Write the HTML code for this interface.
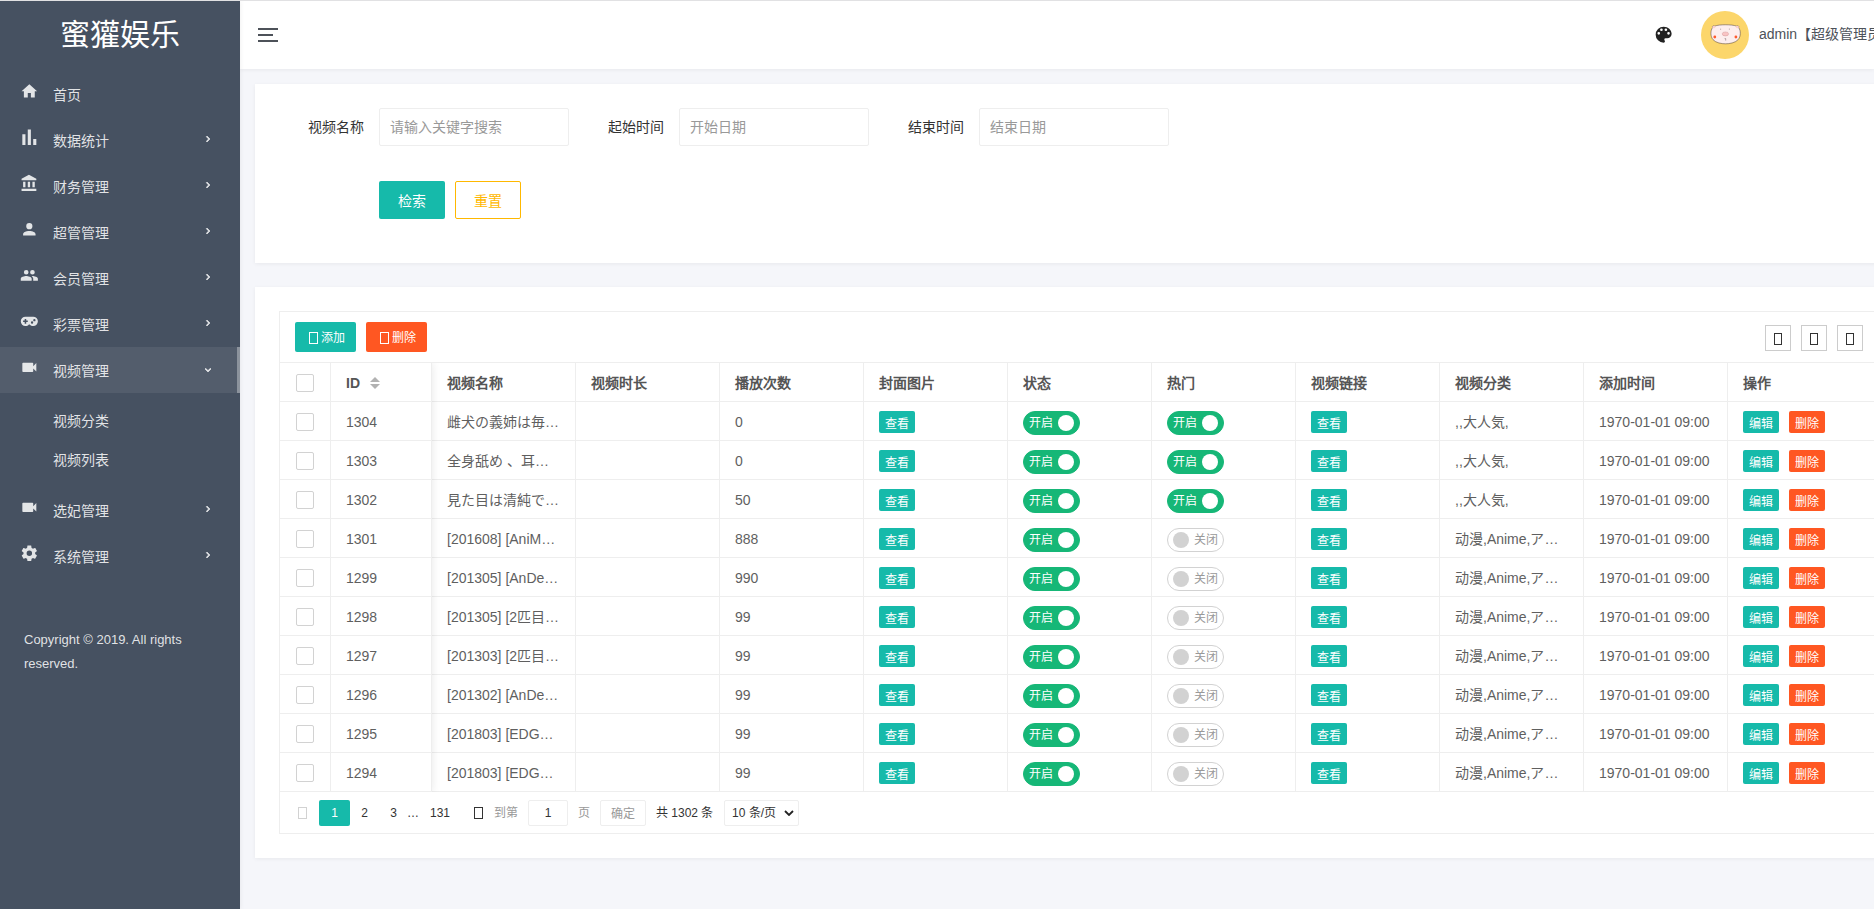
<!DOCTYPE html>
<html lang="zh-CN">
<head>
<meta charset="utf-8">
<title>视频列表</title>
<style>
*{box-sizing:border-box;margin:0;padding:0}
html,body{width:1874px;height:909px;overflow:hidden}
body{font-family:"Liberation Sans",sans-serif;font-size:14px;color:#4d5259;background:#f5f6fa;position:relative;line-height:1.5}
ul{list-style:none}
a{text-decoration:none;color:inherit}
.topline{position:absolute;left:0;top:0;width:1874px;height:1px;background:#e1e1e3;z-index:30}
/* sidebar */
.sidebar{position:absolute;left:0;top:1px;width:240px;height:908px;background:#465161;color:rgba(255,255,255,.85);z-index:20;box-shadow:0 0 5px rgba(0,0,0,.08)}
.logo{height:68px;line-height:68px;text-align:center;font-size:30px;color:#fff;white-space:nowrap}
.nav{margin-top:2px}
.nav>li>a{display:block;position:relative;height:46px;line-height:48px;padding-left:53px;font-size:14px;color:rgba(255,255,255,.85)}
.nav>li>a svg.ic{position:absolute;left:20.3px;top:11px;width:18.66px;height:18.66px;fill:rgba(255,255,255,.85)}
.nav>li>a svg.ch{position:absolute;left:202px;top:16px;width:12px;height:12px;fill:rgba(255,255,255,.85);stroke:rgba(255,255,255,.85);stroke-width:1.2}
.nav>li.open>a svg.ch{top:17px}
.nav>li.open>a{background:rgba(255,255,255,.075);border-right:3px solid #8c939d}
.sub{padding:8px 0}
.sub a{display:block;height:39px;line-height:40px;padding-left:53px;color:rgba(255,255,255,.85)}
.sfoot{margin-top:24px;padding:25px 24px;font-size:13px;line-height:24px;color:rgba(255,255,255,.85);width:240px}
/* header */
.header{position:absolute;left:240px;top:1px;width:1634px;height:68px;background:#fff;box-shadow:0 1px 4px rgba(0,0,0,.06);z-index:10}
.tog{position:absolute;left:18px;top:27px;width:20px}
.tog i{display:block;height:2px;background:#4d5259;margin-bottom:4px;width:20px}
.tog i:nth-child(2){width:15px}
.pal{position:absolute;left:1412.5px;top:23.3px;width:21.3px;height:21.3px;fill:#222}
.avatar{position:absolute;left:1461px;top:10px;width:48px;height:48px;border-radius:50%;background:#fcd66b;overflow:hidden}
.uname{position:absolute;left:1519px;top:0;height:68px;line-height:66px;white-space:nowrap;color:#4d5259;font-size:14px}
/* cards */
.card{position:absolute;left:255px;width:1700px;background:#fff;box-shadow:0 1px 4px rgba(0,0,0,.06)}
.c1{top:84px;height:179px}
.c2{top:287px;height:571px}
/* form */
.flabel{position:absolute;top:24px;height:38px;line-height:38px;width:110px;padding-right:15px;text-align:right;color:#333;font-size:14px;white-space:nowrap}
.finput{position:absolute;top:24px;height:38px;width:190px;border:1px solid #eee;border-radius:2px;line-height:36px;padding-left:10px;color:#999;font-size:14px;background:#fff;white-space:nowrap}
.btn{position:absolute;top:97px;height:38px;line-height:40px;width:66px;text-align:center;border-radius:2px;font-size:14px;white-space:nowrap}
.btn.p{background:#16baaa;color:#fff}
.btn.w{border:1px solid #ffb800;color:#ffb800;background:#fff;line-height:38px}

/* table */
.tview{position:absolute;left:24px;top:24px;width:1700px;height:523px;border:1px solid #eee;color:#5f5f5f}
.ttool{position:relative;height:51px;border-bottom:1px solid #eee}
.sm{position:absolute;top:10px;height:30px;width:61px;line-height:33px;border-radius:2px;color:#fff;font-size:12px;padding-left:26px;white-space:nowrap}
.t{background:#16baaa}.d{background:#ff5722}
.tofu{position:absolute;width:9px;height:12px;border:1px solid #fff}
.sm .tofu{left:14px;top:10px}
.tic{position:absolute;top:13px;width:26px;height:26px;border:1px solid #ccc}
.tic b{position:absolute;left:8px;top:7px;width:8px;height:12px;border:1px solid #333}
.tbox{position:relative;overflow:hidden;height:429px}
table{border-collapse:separate;border-spacing:0;table-layout:fixed;width:1668px}
th,td{height:39px;border-right:1px solid #eee;border-bottom:1px solid #eee;padding:0;text-align:left;font-size:14px;color:#5f5f5f;font-weight:normal;vertical-align:top;line-height:36px}
.c{display:flex;align-items:center;height:38px;padding:2px 15px 0;white-space:nowrap;overflow:hidden;line-height:36px;font-size:14px}
th{font-weight:bold;color:#555}
.ck .c{padding:2px 0 0;justify-content:center}
.cb{display:inline-block;width:18px;height:18px;border:1px solid #d2d2d2;border-radius:2px;background:#fff;flex:none}
.sort{display:inline-block;position:relative;width:10px;height:12px;margin-left:10px;flex:none}
.sort i{position:absolute;left:0;border:5px solid transparent}
.sort .u{top:-5px;border-bottom-color:#b2b2b2}
.sort .dn{top:7px;border-top-color:#b2b2b2}
.xs{display:inline-block;width:36px;height:22px;line-height:26px;overflow:hidden;font-size:12px;color:#fff;text-align:center;border-radius:2px;flex:none}
.xs+.xs{margin-left:10px}
.sw{display:inline-block;position:relative;width:57px;height:24px;border:1px solid #d2d2d2;border-radius:20px;background:#fff;flex:none;margin-top:2px;font-size:12px;line-height:23px}
.sw i{position:absolute;left:5px;top:3px;width:16px;height:16px;border-radius:50%;background:#d2d2d2}
.sw em{position:absolute;left:26px;top:0;font-style:normal;color:#999;width:24px;text-align:center}
.sw.on{background:#16b777;border-color:#16b777}
.sw.on i{left:34px;background:#fff}
.sw.on em{left:5px;color:#fff}
.fixl{position:absolute;left:0;top:0;width:152px;height:429px;box-shadow:1px 0 8px rgba(0,0,0,.08);pointer-events:none}
.tpage{position:relative;height:41px;font-size:12px;color:#333}
.tpage .tofu{top:15px;height:12px;width:9px}
.tofu.g{border-color:#d2d2d2}.tofu.k{border-color:#333}
.pg{position:absolute;top:8px;height:26px;line-height:26px;text-align:center;color:#333;border-radius:2px}
.pg.cur{background:#16baaa;color:#fff}
.pt{position:absolute;top:8px;height:26px;line-height:26px;white-space:nowrap;color:#333}
.pt.g{color:#999}
.pin{position:absolute;top:8px;width:40px;height:26px;line-height:24px;border:1px solid #eee;border-radius:2px;text-align:center;color:#333}
.pbtn{position:absolute;top:8px;width:46px;height:26px;line-height:26px;border:1px solid #eee;border-radius:2px;text-align:center;color:#999}
.psel{position:absolute;top:8px;width:75px;height:26px;line-height:24px;border:1px solid #eee;border-radius:2px;padding-left:7px;color:#333;white-space:nowrap}
.psel svg{position:absolute;right:4px;top:9px;width:10px;height:6px}
</style>
</head>
<body>
<div class="topline"></div>

<div class="sidebar">
  <div class="logo">蜜獾娱乐</div>
  <ul class="nav">
    <li><a href="#"><svg class="ic" viewBox="0 0 24 24"><path d="M10,20V14H14V20H19V12H22L12,3L2,12H5V20H10Z"/></svg>首页</a>
    </li>
    <li><a href="#"><svg class="ic" viewBox="0 0 24 24"><path d="M3,22V8H7V22H3M10,22V2H14V22H10M17,22V14H21V22H17Z"/></svg>数据统计<svg class="ch" viewBox="0 0 24 24"><path d="M8.59,16.58L13.17,12L8.59,7.41L10,6L16,12L10,18L8.59,16.58Z"/></svg></a>
    </li>
    <li><a href="#"><svg class="ic" viewBox="0 0 24 24"><path d="M11.5,1L2,6V8H21V6M16,10V17H19V10M2,22H21V19H2M10,10V17H13V10M4,10V17H7V10H4Z"/></svg>财务管理<svg class="ch" viewBox="0 0 24 24"><path d="M8.59,16.58L13.17,12L8.59,7.41L10,6L16,12L10,18L8.59,16.58Z"/></svg></a>
    </li>
    <li><a href="#"><svg class="ic" viewBox="0 0 24 24"><path d="M12,4A4,4 0 0,1 16,8A4,4 0 0,1 12,12A4,4 0 0,1 8,8A4,4 0 0,1 12,4M12,14C16.42,14 20,15.79 20,18V20H4V18C4,15.79 7.58,14 12,14Z"/></svg>超管管理<svg class="ch" viewBox="0 0 24 24"><path d="M8.59,16.58L13.17,12L8.59,7.41L10,6L16,12L10,18L8.59,16.58Z"/></svg></a>
    </li>
    <li><a href="#"><svg class="ic" viewBox="0 0 24 24"><path d="M16,13C15.71,13 15.38,13 15.03,13.05C16.19,13.89 17,15 17,16.5V19H23V16.5C23,14.17 18.33,13 16,13M8,13C5.67,13 1,14.17 1,16.5V19H15V16.5C15,14.17 10.33,13 8,13M8,11A3,3 0 0,0 11,8A3,3 0 0,0 8,5A3,3 0 0,0 5,8A3,3 0 0,0 8,11M16,11A3,3 0 0,0 19,8A3,3 0 0,0 16,5A3,3 0 0,0 13,8A3,3 0 0,0 16,11Z"/></svg>会员管理<svg class="ch" viewBox="0 0 24 24"><path d="M8.59,16.58L13.17,12L8.59,7.41L10,6L16,12L10,18L8.59,16.58Z"/></svg></a>
    </li>
    <li><a href="#"><svg class="ic" viewBox="0 0 24 24"><path d="M7,6H17A6,6 0 0,1 23,12A6,6 0 0,1 17,18C15.22,18 13.63,17.23 12.53,16H11.47C10.37,17.23 8.78,18 7,18A6,6 0 0,1 1,12A6,6 0 0,1 7,6M6,9V11H4V13H6V15H8V13H10V11H8V9H6M15.5,12A1.5,1.5 0 0,0 14,13.5A1.5,1.5 0 0,0 15.5,15A1.5,1.5 0 0,0 17,13.5A1.5,1.5 0 0,0 15.5,12M18.5,9A1.5,1.5 0 0,0 17,10.5A1.5,1.5 0 0,0 18.5,12A1.5,1.5 0 0,0 20,10.5A1.5,1.5 0 0,0 18.5,9Z"/></svg>彩票管理<svg class="ch" viewBox="0 0 24 24"><path d="M8.59,16.58L13.17,12L8.59,7.41L10,6L16,12L10,18L8.59,16.58Z"/></svg></a>
    </li>
    <li class="open"><a href="#"><svg class="ic" viewBox="0 0 24 24"><path d="M17,10.5V7A1,1 0 0,0 16,6H4A1,1 0 0,0 3,7V17A1,1 0 0,0 4,18H16A1,1 0 0,0 17,17V13.5L21,17.5V6.5L17,10.5Z"/></svg>视频管理<svg class="ch" viewBox="0 0 24 24"><path d="M7.41,8.58L12,13.17L16.59,8.58L18,10L12,16L6,10L7.41,8.58Z"/></svg></a>
      <ul class="sub"><li><a href="#">视频分类</a></li><li><a href="#">视频列表</a></li></ul>
    </li>
    <li><a href="#"><svg class="ic" viewBox="0 0 24 24"><path d="M17,10.5V7A1,1 0 0,0 16,6H4A1,1 0 0,0 3,7V17A1,1 0 0,0 4,18H16A1,1 0 0,0 17,17V13.5L21,17.5V6.5L17,10.5Z"/></svg>选妃管理<svg class="ch" viewBox="0 0 24 24"><path d="M8.59,16.58L13.17,12L8.59,7.41L10,6L16,12L10,18L8.59,16.58Z"/></svg></a>
    </li>
    <li><a href="#"><svg class="ic" viewBox="0 0 24 24"><path d="M12,15.5A3.5,3.5 0 0,1 8.5,12A3.5,3.5 0 0,1 12,8.5A3.5,3.5 0 0,1 15.5,12A3.5,3.5 0 0,1 12,15.5M19.43,12.97C19.47,12.65 19.5,12.33 19.5,12C19.5,11.67 19.47,11.34 19.43,11L21.54,9.37C21.73,9.22 21.78,8.95 21.66,8.73L19.66,5.27C19.54,5.05 19.27,4.96 19.05,5.05L16.56,6.05C16.04,5.66 15.5,5.32 14.87,5.07L14.5,2.42C14.46,2.18 14.25,2 14,2H10C9.75,2 9.54,2.18 9.5,2.42L9.13,5.07C8.5,5.32 7.96,5.66 7.44,6.05L4.95,5.05C4.73,4.96 4.46,5.05 4.34,5.27L2.34,8.73C2.21,8.95 2.27,9.22 2.46,9.37L4.57,11C4.53,11.34 4.5,11.67 4.5,12C4.5,12.33 4.53,12.65 4.57,12.97L2.46,14.63C2.27,14.78 2.21,15.05 2.34,15.27L4.34,18.73C4.46,18.95 4.73,19.03 4.95,18.95L7.44,17.94C7.96,18.34 8.5,18.68 9.13,18.93L9.5,21.58C9.54,21.82 9.75,22 10,22H14C14.25,22 14.46,21.82 14.5,21.58L14.87,18.93C15.5,18.67 16.04,18.34 16.56,17.94L19.05,18.95C19.27,19.03 19.54,18.95 19.66,18.73L21.66,15.27C21.78,15.05 21.73,14.78 21.54,14.63L19.43,12.97Z"/></svg>系统管理<svg class="ch" viewBox="0 0 24 24"><path d="M8.59,16.58L13.17,12L8.59,7.41L10,6L16,12L10,18L8.59,16.58Z"/></svg></a>
    </li>
  </ul>
  <div class="sfoot">Copyright © 2019. All rights reserved.</div>
</div>

<div class="header">
  <div class="tog"><i></i><i></i><i></i></div>
  <svg class="pal" viewBox="0 0 24 24"><path d="M17.5,12A1.5,1.5 0 0,1 16,10.5A1.5,1.5 0 0,1 17.5,9A1.5,1.5 0 0,1 19,10.5A1.5,1.5 0 0,1 17.5,12M14.5,8A1.5,1.5 0 0,1 13,6.5A1.5,1.5 0 0,1 14.5,5A1.5,1.5 0 0,1 16,6.5A1.5,1.5 0 0,1 14.5,8M9.5,8A1.5,1.5 0 0,1 8,6.5A1.5,1.5 0 0,1 9.5,5A1.5,1.5 0 0,1 11,6.5A1.5,1.5 0 0,1 9.5,8M6.5,12A1.5,1.5 0 0,1 5,10.5A1.5,1.5 0 0,1 6.5,9A1.5,1.5 0 0,1 8,10.5A1.5,1.5 0 0,1 6.5,12M12,3A9,9 0 0,0 3,12A9,9 0 0,0 12,21A1.5,1.5 0 0,0 13.5,19.5C13.5,19.11 13.35,18.76 13.11,18.5C12.88,18.23 12.73,17.88 12.73,17.5A1.5,1.5 0 0,1 14.23,16H16A5,5 0 0,0 21,11C21,6.58 16.97,3 12,3Z"/></svg>
  <div class="avatar"><svg viewBox="0 0 48 48" width="48" height="48">
    <path d="M11.6,16.6C10.8,15 12.5,14.4 13.8,15.1C18,13.3 31,13.3 35.4,15.1C36.7,14.4 38.4,15 37.6,16.6C40,19.5 39.9,25.5 37.2,28.6C34.2,31.9 28.5,32.8 24.5,32.8C20.5,32.8 14.8,31.9 12,28.6C9.3,25.5 9.3,19.5 11.6,16.6Z" fill="#fdeeee" stroke="#5a4a42" stroke-width=".55"/>
    <ellipse cx="12.9" cy="16.1" rx="1.5" ry="1.2" fill="#fbd0d0"/><ellipse cx="36.3" cy="16.1" rx="1.5" ry="1.2" fill="#fbd0d0"/>
    <ellipse cx="24.4" cy="22.9" rx="3.2" ry="2" fill="#f9c4c4" stroke="#c98a8a" stroke-width=".35"/>
    <circle cx="13.8" cy="26" r="1.4" fill="#ff5a2e"/><circle cx="34.9" cy="26" r="1.4" fill="#ff5a2e"/>
    <path d="M19.6 17.6v1.3M28.4 17.5v1.3" stroke="#8a7a7a" stroke-width=".5"/>
    <path d="M23.6 27.6h1.1v2" stroke="#6a5a5a" stroke-width=".5" fill="none"/>
  </svg></div>
  <div class="uname">admin【超级管理员】</div>
</div>

<div class="card c1">
  <div class="flabel" style="left:14px">视频名称</div>
  <div class="finput" style="left:124px">请输入关键字搜索</div>
  <div class="flabel" style="left:314px">起始时间</div>
  <div class="finput" style="left:424px">开始日期</div>
  <div class="flabel" style="left:614px">结束时间</div>
  <div class="finput" style="left:724px">结束日期</div>
  <div class="btn p" style="left:124px">检索</div>
  <div class="btn w" style="left:200px">重置</div>
</div>

<div class="card c2">
  <div class="tview">
    <div class="ttool">
      <a class="sm t" style="left:15px"><b class="tofu"></b>添加</a>
      <a class="sm d" style="left:86px"><b class="tofu"></b>删除</a>
      <span class="tic" style="left:1485px"><b></b></span>
      <span class="tic" style="left:1521px"><b></b></span>
      <span class="tic" style="left:1557px"><b></b></span>
    </div>
    <div class="tbox">
    <table>
      <colgroup><col style="width:51px"><col style="width:101px"><col style="width:144px"><col style="width:144px"><col style="width:144px"><col style="width:144px"><col style="width:144px"><col style="width:144px"><col style="width:144px"><col style="width:144px"><col style="width:144px"><col style="width:220px"></colgroup>
      <thead>
      <tr><th class="ck"><div class="c"><span class="cb"></span></div></th><th><div class="c">ID<span class="sort"><i class="u"></i><i class="dn"></i></span></div></th><th><div class="c">视频名称</div></th><th><div class="c">视频时长</div></th><th><div class="c">播放次数</div></th><th><div class="c">封面图片</div></th><th><div class="c">状态</div></th><th><div class="c">热门</div></th><th><div class="c">视频链接</div></th><th><div class="c">视频分类</div></th><th><div class="c">添加时间</div></th><th><div class="c">操作</div></th></tr>
      </thead>
      <tbody>
      <tr><td class="ck"><div class="c"><span class="cb"></span></div></td><td><div class="c">1304</div></td><td><div class="c">雌犬の義姉は毎…</div></td><td><div class="c"></div></td><td><div class="c">0</div></td><td><div class="c"><a class="xs t">查看</a></div></td><td><div class="c"><span class="sw on"><em>开启</em><i></i></span></div></td><td><div class="c"><span class="sw on"><em>开启</em><i></i></span></div></td><td><div class="c"><a class="xs t">查看</a></div></td><td><div class="c">,,大人気,</div></td><td><div class="c">1970-01-01 09:00</div></td><td><div class="c"><a class="xs t">编辑</a><a class="xs d">删除</a></div></td></tr>
      <tr><td class="ck"><div class="c"><span class="cb"></span></div></td><td><div class="c">1303</div></td><td><div class="c">全身舐め 、耳…</div></td><td><div class="c"></div></td><td><div class="c">0</div></td><td><div class="c"><a class="xs t">查看</a></div></td><td><div class="c"><span class="sw on"><em>开启</em><i></i></span></div></td><td><div class="c"><span class="sw on"><em>开启</em><i></i></span></div></td><td><div class="c"><a class="xs t">查看</a></div></td><td><div class="c">,,大人気,</div></td><td><div class="c">1970-01-01 09:00</div></td><td><div class="c"><a class="xs t">编辑</a><a class="xs d">删除</a></div></td></tr>
      <tr><td class="ck"><div class="c"><span class="cb"></span></div></td><td><div class="c">1302</div></td><td><div class="c">見た目は清純で…</div></td><td><div class="c"></div></td><td><div class="c">50</div></td><td><div class="c"><a class="xs t">查看</a></div></td><td><div class="c"><span class="sw on"><em>开启</em><i></i></span></div></td><td><div class="c"><span class="sw on"><em>开启</em><i></i></span></div></td><td><div class="c"><a class="xs t">查看</a></div></td><td><div class="c">,,大人気,</div></td><td><div class="c">1970-01-01 09:00</div></td><td><div class="c"><a class="xs t">编辑</a><a class="xs d">删除</a></div></td></tr>
      <tr><td class="ck"><div class="c"><span class="cb"></span></div></td><td><div class="c">1301</div></td><td><div class="c">[201608] [AniM…</div></td><td><div class="c"></div></td><td><div class="c">888</div></td><td><div class="c"><a class="xs t">查看</a></div></td><td><div class="c"><span class="sw on"><em>开启</em><i></i></span></div></td><td><div class="c"><span class="sw"><i></i><em>关闭</em></span></div></td><td><div class="c"><a class="xs t">查看</a></div></td><td><div class="c">动漫,Anime,ア…</div></td><td><div class="c">1970-01-01 09:00</div></td><td><div class="c"><a class="xs t">编辑</a><a class="xs d">删除</a></div></td></tr>
      <tr><td class="ck"><div class="c"><span class="cb"></span></div></td><td><div class="c">1299</div></td><td><div class="c">[201305] [AnDe…</div></td><td><div class="c"></div></td><td><div class="c">990</div></td><td><div class="c"><a class="xs t">查看</a></div></td><td><div class="c"><span class="sw on"><em>开启</em><i></i></span></div></td><td><div class="c"><span class="sw"><i></i><em>关闭</em></span></div></td><td><div class="c"><a class="xs t">查看</a></div></td><td><div class="c">动漫,Anime,ア…</div></td><td><div class="c">1970-01-01 09:00</div></td><td><div class="c"><a class="xs t">编辑</a><a class="xs d">删除</a></div></td></tr>
      <tr><td class="ck"><div class="c"><span class="cb"></span></div></td><td><div class="c">1298</div></td><td><div class="c">[201305] [2匹目…</div></td><td><div class="c"></div></td><td><div class="c">99</div></td><td><div class="c"><a class="xs t">查看</a></div></td><td><div class="c"><span class="sw on"><em>开启</em><i></i></span></div></td><td><div class="c"><span class="sw"><i></i><em>关闭</em></span></div></td><td><div class="c"><a class="xs t">查看</a></div></td><td><div class="c">动漫,Anime,ア…</div></td><td><div class="c">1970-01-01 09:00</div></td><td><div class="c"><a class="xs t">编辑</a><a class="xs d">删除</a></div></td></tr>
      <tr><td class="ck"><div class="c"><span class="cb"></span></div></td><td><div class="c">1297</div></td><td><div class="c">[201303] [2匹目…</div></td><td><div class="c"></div></td><td><div class="c">99</div></td><td><div class="c"><a class="xs t">查看</a></div></td><td><div class="c"><span class="sw on"><em>开启</em><i></i></span></div></td><td><div class="c"><span class="sw"><i></i><em>关闭</em></span></div></td><td><div class="c"><a class="xs t">查看</a></div></td><td><div class="c">动漫,Anime,ア…</div></td><td><div class="c">1970-01-01 09:00</div></td><td><div class="c"><a class="xs t">编辑</a><a class="xs d">删除</a></div></td></tr>
      <tr><td class="ck"><div class="c"><span class="cb"></span></div></td><td><div class="c">1296</div></td><td><div class="c">[201302] [AnDe…</div></td><td><div class="c"></div></td><td><div class="c">99</div></td><td><div class="c"><a class="xs t">查看</a></div></td><td><div class="c"><span class="sw on"><em>开启</em><i></i></span></div></td><td><div class="c"><span class="sw"><i></i><em>关闭</em></span></div></td><td><div class="c"><a class="xs t">查看</a></div></td><td><div class="c">动漫,Anime,ア…</div></td><td><div class="c">1970-01-01 09:00</div></td><td><div class="c"><a class="xs t">编辑</a><a class="xs d">删除</a></div></td></tr>
      <tr><td class="ck"><div class="c"><span class="cb"></span></div></td><td><div class="c">1295</div></td><td><div class="c">[201803] [EDG…</div></td><td><div class="c"></div></td><td><div class="c">99</div></td><td><div class="c"><a class="xs t">查看</a></div></td><td><div class="c"><span class="sw on"><em>开启</em><i></i></span></div></td><td><div class="c"><span class="sw"><i></i><em>关闭</em></span></div></td><td><div class="c"><a class="xs t">查看</a></div></td><td><div class="c">动漫,Anime,ア…</div></td><td><div class="c">1970-01-01 09:00</div></td><td><div class="c"><a class="xs t">编辑</a><a class="xs d">删除</a></div></td></tr>
      <tr><td class="ck"><div class="c"><span class="cb"></span></div></td><td><div class="c">1294</div></td><td><div class="c">[201803] [EDG…</div></td><td><div class="c"></div></td><td><div class="c">99</div></td><td><div class="c"><a class="xs t">查看</a></div></td><td><div class="c"><span class="sw on"><em>开启</em><i></i></span></div></td><td><div class="c"><span class="sw"><i></i><em>关闭</em></span></div></td><td><div class="c"><a class="xs t">查看</a></div></td><td><div class="c">动漫,Anime,ア…</div></td><td><div class="c">1970-01-01 09:00</div></td><td><div class="c"><a class="xs t">编辑</a><a class="xs d">删除</a></div></td></tr>
      </tbody>
    </table>
    <div class="fixl"></div>
    </div>
    <div class="tpage">
      <b class="tofu g" style="left:18px"></b>
      <span class="pg cur" style="left:39px;width:31px">1</span>
      <span class="pg" style="left:69px;width:31px">2</span>
      <span class="pg" style="left:98px;width:31px">3</span>
      <span class="pg" style="left:127px;width:12px">…</span>
      <span class="pg" style="left:138px;width:44px">131</span>
      <b class="tofu k" style="left:194px"></b>
      <span class="pt g" style="left:214px">到第</span>
      <span class="pin" style="left:248px">1</span>
      <span class="pt g" style="left:298px">页</span>
      <span class="pbtn" style="left:320px">确定</span>
      <span class="pt" style="left:376px">共 1302 条</span>
      <span class="psel" style="left:444px">10 条/页<svg viewBox="0 0 10 6"><path d="M1 1l4 4 4-4" fill="none" stroke="#222" stroke-width="1.8"/></svg></span>
    </div>
  </div>
</div>
</body>
</html>
